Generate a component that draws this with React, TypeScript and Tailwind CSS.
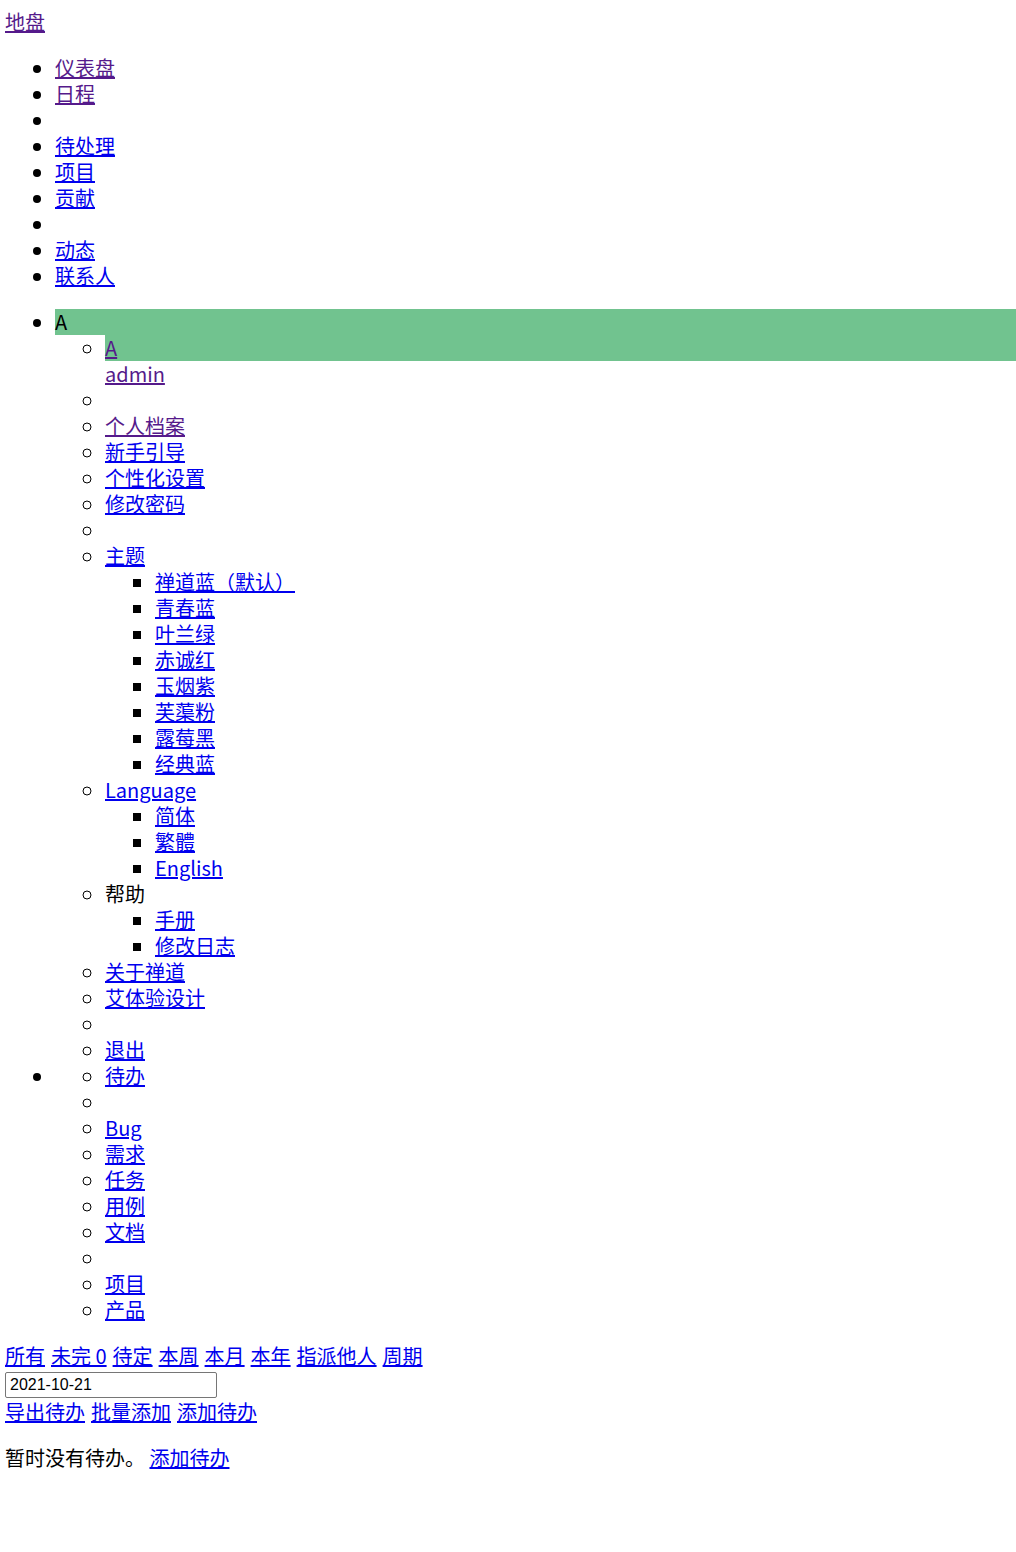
import React from 'react';

const visited = 'text-[#551a8b] underline';
const link = 'text-[#0000ee] underline';

type Item = { label?: string; visited?: boolean; plain?: boolean; children?: Item[] };

const topNav: Item[] = [
  { label: '仪表盘', visited: true },
  { label: '日程', visited: true },
  {},
  { label: '待处理' },
  { label: '项目' },
  { label: '贡献' },
  {},
  { label: '动态' },
  { label: '联系人' },
];

const userMenu: Item[] = [
  { label: '个人档案', visited: true },
  { label: '新手引导' },
  { label: '个性化设置' },
  { label: '修改密码' },
  {},
  {
    label: '主题',
    children: ['禅道蓝（默认）', '青春蓝', '叶兰绿', '赤诚红', '玉烟紫', '芙蕖粉', '露莓黑', '经典蓝'].map((l) => ({ label: l })),
  },
  { label: 'Language', children: [{ label: '简体' }, { label: '繁體' }, { label: 'English' }] },
  { label: '帮助', plain: true, children: [{ label: '手册' }, { label: '修改日志' }] },
  { label: '关于禅道' },
  { label: '艾体验设计' },
  {},
  { label: '退出' },
];

const createMenu: Item[] = [
  { label: '待办' },
  {},
  { label: 'Bug' },
  { label: '需求' },
  { label: '任务' },
  { label: '用例' },
  { label: '文档' },
  {},
  { label: '项目' },
  { label: '产品' },
];

const Li: React.FC<{ item: Item }> = ({ item }) => {
  if (!item.label) return <li className="h-[26px]"></li>;
  return (
    <li>
      {item.plain ? (
        <span>{item.label}</span>
      ) : (
        <a href="#" className={item.visited ? visited : link}>
          {item.label}
        </a>
      )}
      {item.children && (
        <ul className="list-[square] pl-[50px]">
          {item.children.map((c, i) => (
            <Li key={i} item={c} />
          ))}
        </ul>
      )}
    </li>
  );
};

export default function App() {
  const tabs = ['所有', '未完 0', '待定', '本周', '本月', '本年', '指派他人', '周期'];
  return (
    <div
      className="pt-[9px] pl-[5px] text-[20px] leading-[26px] text-black"
      style={{ fontFamily: '"Noto Sans CJK SC", "Noto Sans", sans-serif' }}
    >
      <div>
        <a href="#" className={visited}>地盘</a>
      </div>

      <ul className="list-disc pl-[50px] my-5">
        {topNav.map((it, i) => (
          <Li key={i} item={it} />
        ))}
      </ul>

      <ul className="list-disc pl-[50px] my-5">
        <li>
          <div className="bg-[#71c38f]">A</div>
          <ul className="list-[circle] pl-[50px]">
            <li>
              <div className="bg-[#71c38f]">
                <a href="#" className={visited}>A</a>
              </div>
              <div>
                <a href="#" className={visited}>admin</a>
              </div>
            </li>
            <li className="h-[26px]"></li>
            {userMenu.map((it, i) => (
              <Li key={i} item={it} />
            ))}
          </ul>
        </li>
        <li>
          <ul className="list-[circle] pl-[50px]">
            {createMenu.map((it, i) => (
              <Li key={i} item={it} />
            ))}
          </ul>
        </li>
      </ul>

      <div className="flex gap-[6px]">
        {tabs.map((t) => (
          <a key={t} href="#" className={link}>
            {t}
          </a>
        ))}
      </div>
      <div className="h-[30px] pt-[3px]">
        <input
          type="text"
          defaultValue="2021-10-21"
          className="block w-[212px] h-[26px] border border-[#767676] rounded-[2px] px-[4px] text-[16px] text-black"
          style={{ fontFamily: '"Liberation Sans", Arial, sans-serif' }}
        />
      </div>
      <div className="flex gap-[6px]">
        <a href="#" className={link}>导出待办</a>
        <a href="#" className={link}>批量添加</a>
        <a href="#" className={link}>添加待办</a>
      </div>
      <p className="my-5">
        暂时没有待办。 <a href="#" className={link}>添加待办</a>
      </p>
    </div>
  );
}
